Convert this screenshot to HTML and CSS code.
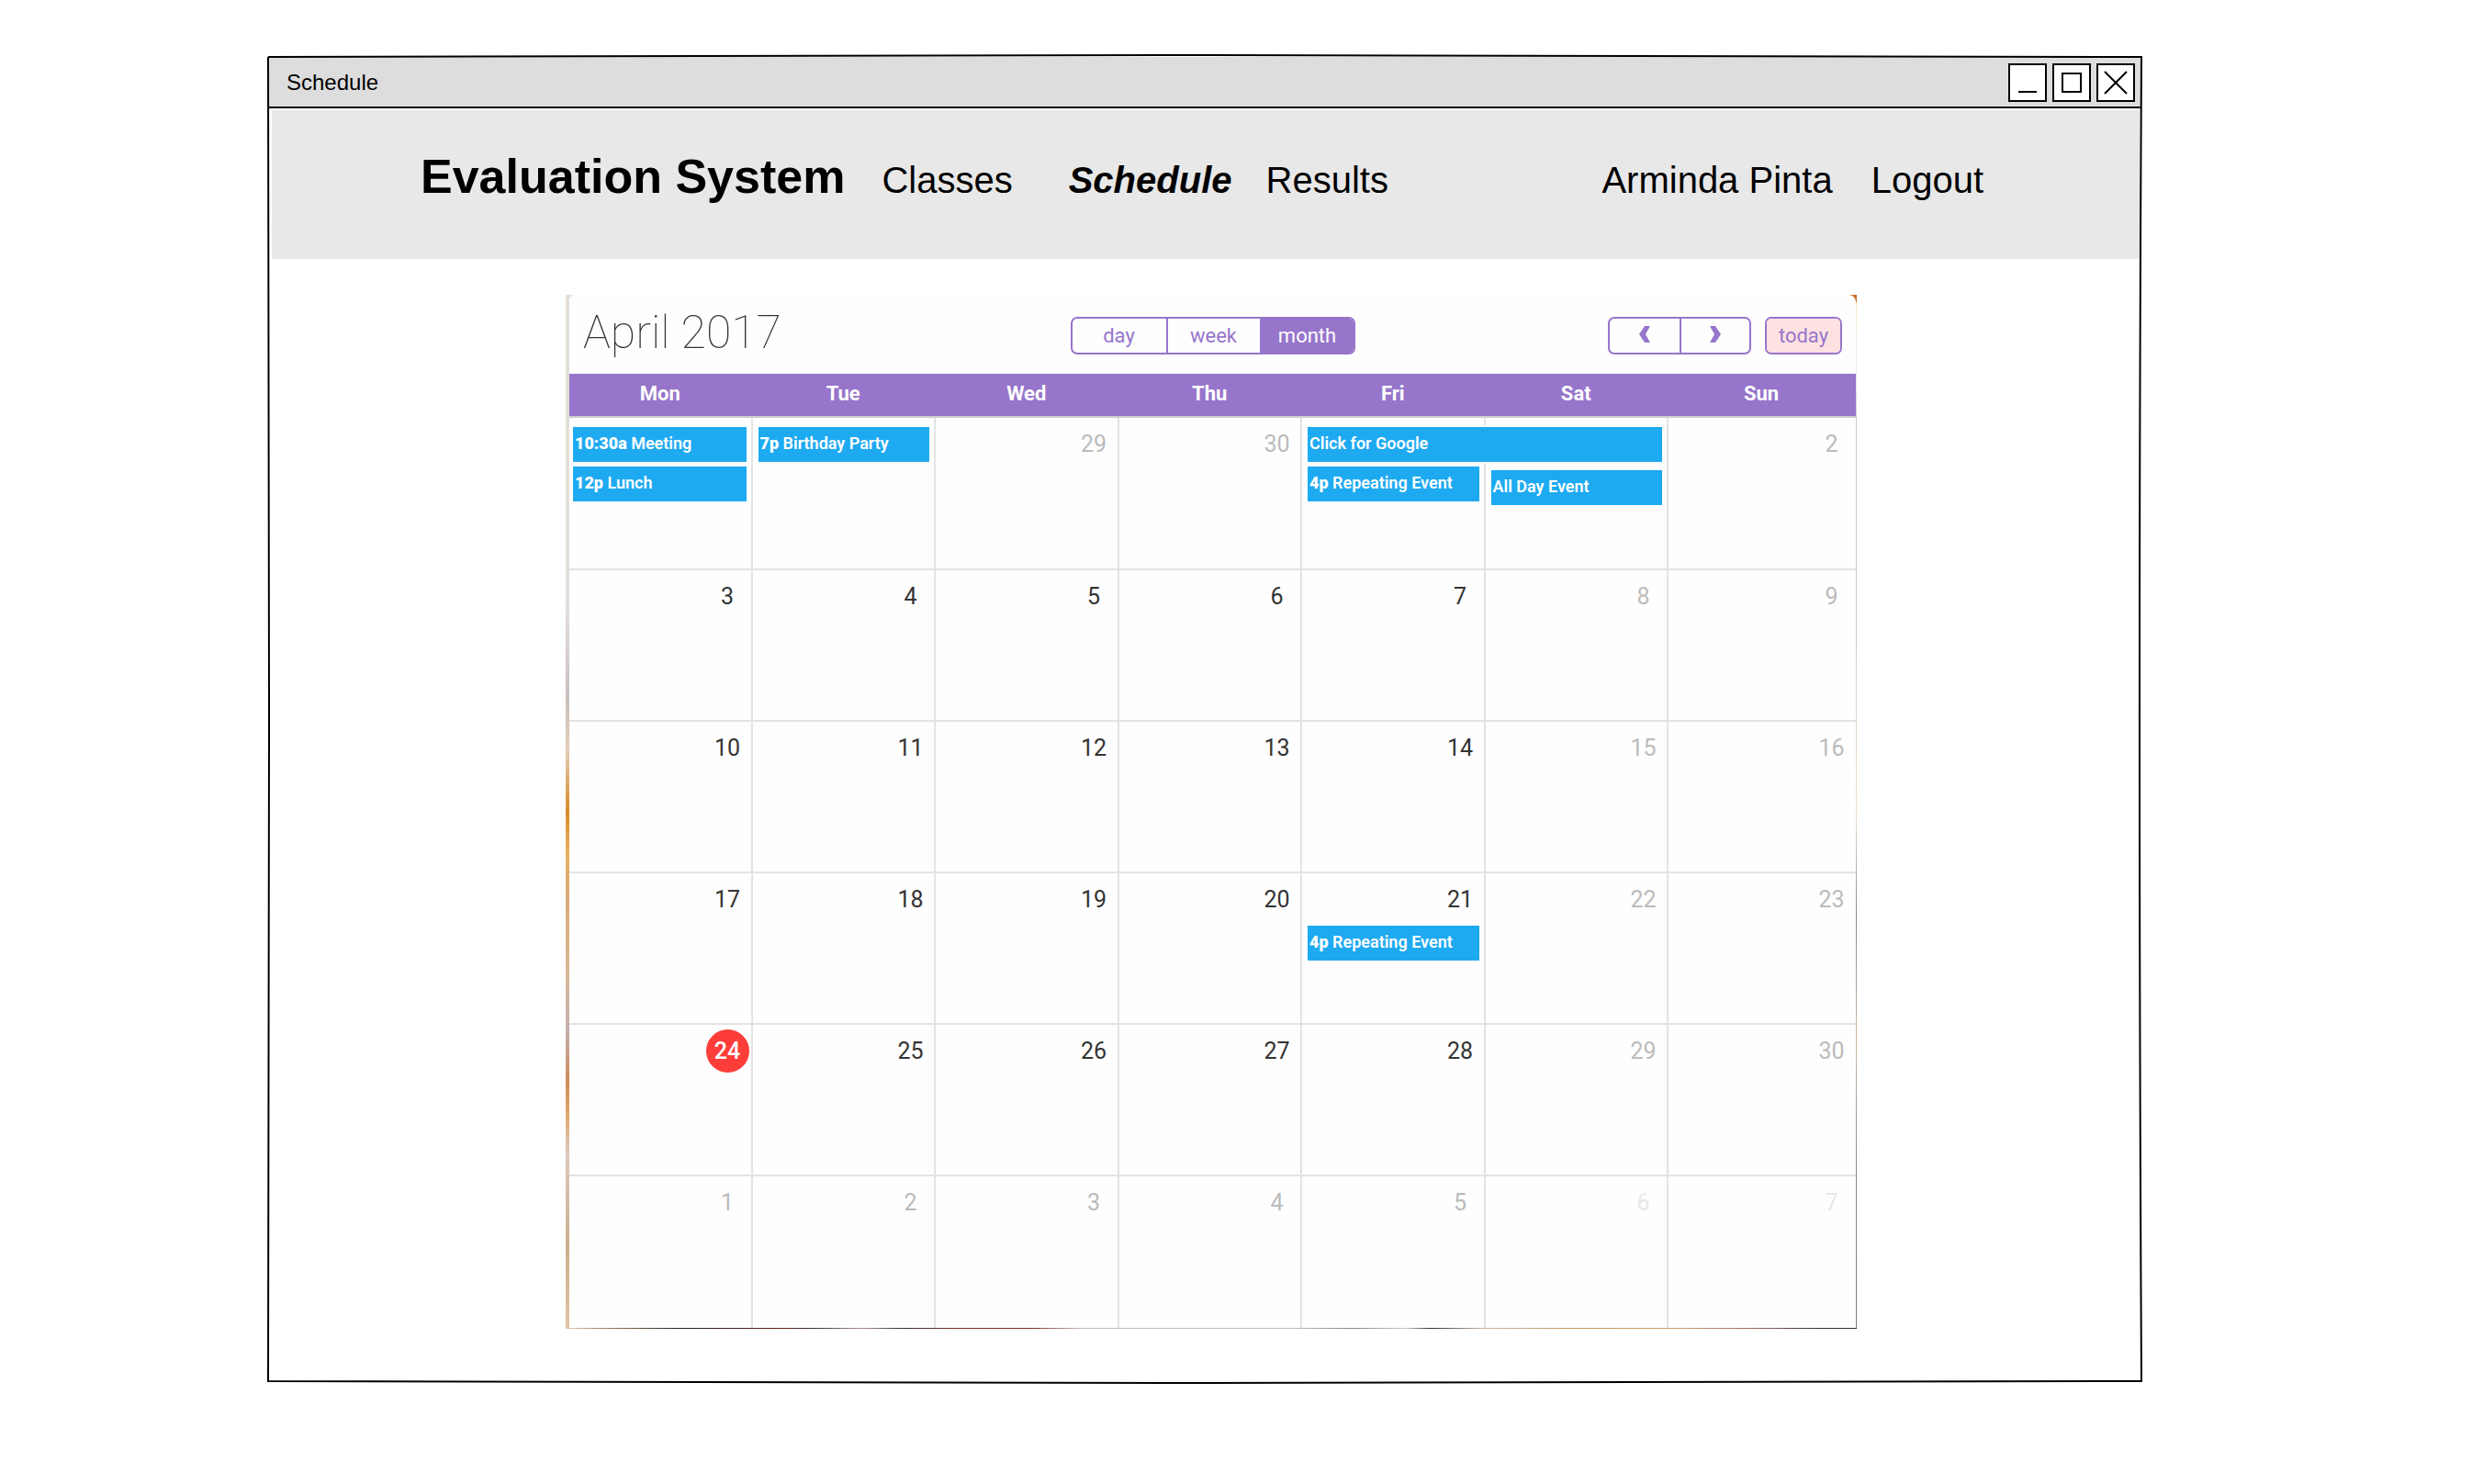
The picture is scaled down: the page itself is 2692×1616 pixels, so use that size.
FILE: index.html
```html
<!DOCTYPE html>
<html lang="en">
<head>
<meta charset="utf-8">
<title>Schedule</title>
<link rel="stylesheet" href="styles.css">
</head>
<body>
<div class="window">
  <div class="titlebar">
    <span class="titlebar-name">Schedule</span>
    <div class="window-controls">
      <button class="control" type="button" aria-label="Minimize"><svg viewBox="0 0 38 38"><path d="M9 29h20"/></svg></button>
      <button class="control" type="button" aria-label="Maximize"><svg viewBox="0 0 38 38"><path d="M9 9h20v20h-20z"/></svg></button>
      <button class="control" type="button" aria-label="Close"><svg viewBox="0 0 38 38"><path d="M7 7l24 24M31 7l-24 24"/></svg></button>
    </div>
  </div>
  <header class="navbar">
    <h1 class="brand">Evaluation System</h1>
    <nav class="nav-main">
      <a href="#classes">Classes</a>
      <a class="current" href="#schedule" aria-current="page">Schedule</a>
      <a href="#results">Results</a>
    </nav>
    <nav class="nav-user">
      <a href="#profile">Arminda Pinta</a>
      <a href="#logout">Logout</a>
    </nav>
  </header>
  <main class="content">
    <section class="photo-edge">
      <div class="calendar">
        <div class="toolbar">
          <h2 class="month">April 2017</h2>
          <div class="group views">
            <button type="button">day</button>
            <button type="button">week</button>
            <button class="active" type="button" aria-pressed="true">month</button>
          </div>
          <div class="pager">
            <div class="group arrows">
              <button type="button" aria-label="Previous month"><svg viewBox="0 0 12 18"><path d="M6 0h6L7 9l5 9H6L0 9z"/></svg></button>
              <button type="button" aria-label="Next month"><svg viewBox="0 0 12 18"><path d="M0 0h6l6 9-6 9H0l5-9z"/></svg></button>
            </div>
            <div class="group"><button class="today-button" type="button">today</button></div>
          </div>
        </div>
        <table class="days">
          <thead>
            <tr><th>Mon</th><th>Tue</th><th>Wed</th><th>Thu</th><th>Fri</th><th>Sat</th><th class="last">Sun</th></tr>
          </thead>
          <tbody>
            <tr>
              <td><ul class="events"><li><b>10:30a</b> Meeting</li><li><b>12p</b> Lunch</li></ul></td>
              <td><ul class="events"><li><b>7p</b> Birthday Party</li></ul></td>
              <td><span class="date muted">29</span></td>
              <td><span class="date muted">30</span></td>
              <td><ul class="events"><li class="two-days">Click for Google</li><li><b>4p</b> Repeating Event</li></ul></td>
              <td><ul class="events second-slot"><li>All Day Event</li></ul></td>
              <td><span class="date muted">2</span></td>
            </tr>
            <tr>
              <td><span class="date">3</span></td><td><span class="date">4</span></td><td><span class="date">5</span></td><td><span class="date">6</span></td><td><span class="date">7</span></td><td><span class="date muted">8</span></td><td><span class="date muted">9</span></td>
            </tr>
            <tr>
              <td><span class="date">10</span></td><td><span class="date">11</span></td><td><span class="date">12</span></td><td><span class="date">13</span></td><td><span class="date">14</span></td><td><span class="date muted">15</span></td><td><span class="date muted">16</span></td>
            </tr>
            <tr>
              <td><span class="date">17</span></td><td><span class="date">18</span></td><td><span class="date">19</span></td><td><span class="date">20</span></td>
              <td><span class="date">21</span><ul class="events"><li><b>4p</b> Repeating Event</li></ul></td>
              <td><span class="date muted">22</span></td><td><span class="date muted">23</span></td>
            </tr>
            <tr>
              <td><span class="date today">24</span></td><td><span class="date">25</span></td><td><span class="date">26</span></td><td><span class="date">27</span></td><td><span class="date">28</span></td><td><span class="date muted">29</span></td><td><span class="date muted">30</span></td>
            </tr>
            <tr>
              <td><span class="date muted">1</span></td><td><span class="date muted">2</span></td><td><span class="date muted">3</span></td><td><span class="date muted">4</span></td><td><span class="date muted">5</span></td><td><span class="date faint">6</span></td><td><span class="date faint">7</span></td>
            </tr>
          </tbody>
        </table>
      </div>
    </section>
  </main>
  <svg class="frame" viewBox="0 0 100 100" preserveAspectRatio="none" aria-hidden="true">
    <path d="M0 0Q50 -.28 100 0Q99.8 50 100 100Q50 100.28 0 100Q.1 50 0 0"/>
  </svg>
</div>
</body>
</html>
```
FILE: styles.css
```css
* { box-sizing: border-box; }

body {
  margin: 0;
  padding: 62px 360px 113px 292px;
  background: #fff;
  color: #000;
  font-family: "Liberation Sans", Arial, sans-serif;
}

a { color: inherit; text-decoration: none; }

button {
  margin: 0;
  padding: 0;
  border: 0;
  background: none;
  color: inherit;
  font: inherit;
}

.window {
  position: relative;
  background: #fff;
}

.frame {
  position: absolute;
  inset: 0;
  width: 100%;
  height: 100%;
  overflow: visible;
  pointer-events: none;
}

.frame path {
  fill: none;
  stroke: #000;
  stroke-width: 2px;
  vector-effect: non-scaling-stroke;
}

.titlebar {
  display: flex;
  align-items: center;
  justify-content: space-between;
  height: 56px;
  padding: 2px 7px 0 20px;
  border-bottom: 2px solid #000;
  background: #ddd;
  font-size: 24px;
}

.window-controls { display: flex; gap: 6px; }

.control {
  width: 42px;
  height: 42px;
  border: 2px solid #000;
  background: #fff;
}

.control svg {
  display: block;
  fill: none;
  stroke: #000;
  stroke-width: 2;
}

.navbar {
  display: flex;
  align-items: baseline;
  margin: 2px 2px 0 4px;
  padding: 42px 170px 56px 162px;
  background: #e8e8e8;
  font-size: 40px;
  line-height: 60px;
}

.brand {
  margin: 0 40px 0 0;
  font-size: 52px;
  line-height: 60px;
}

.nav-main { display: flex; gap: 37px; }

.nav-user {
  display: flex;
  gap: 42px;
  margin-left: auto;
}

.current {
  margin-left: 24px;
  font-weight: bold;
  font-style: italic;
}

.content { padding: 39px 310px 57px 324px; }

/* The sliver of background photo left visible round the calendar */
.photo-edge {
  padding: 0 1px 1px 4px;
  background:
    linear-gradient(#c8702a, #c8702a) top right / 8px 8px no-repeat,
    linear-gradient(to right, #e8d0a8, #a08060 3%, #222 9%, #702020 17%, #333 19%, #b09090 23%, #333 26%, #803030 30%, #803030 36%, #ccc0b8 40%, #ccc0b8 56%, #888 61%, #ccc 65%, #333 67%, #ccb8a8 71%, #c89860 78%, #d0a070 86%, #906060 93%, #333 97%) bottom / 100% 1px no-repeat,
    linear-gradient(#f5e0c0, #eee 7%, #ccc 12%, #ccc 30%, #e8d8c8 45%, #f0e0d0 50%, #888 60%, #ccb8a5 72%, #888 85%, #777) right / 1px 100% no-repeat,
    linear-gradient(#e5dfd9, #e5dfdb 30%, #c8c0bc 39%, #e3cdb8 44%, #d98b28 50%, #e8b060 54%, #d9ab78 58%, #d8b898 66%, #c4b0b0 71%, #cd8c5a 76%, #e0a468 79%, #dccabf 83%, #ccae8c 92%, #e3c4a5);
}

.calendar {
  border-radius: 6px 8px 0 0;
  background: #fefefe;
  color: #333;
  font-family: Roboto, sans-serif;
}

.toolbar {
  display: grid;
  grid-template-columns: 1fr auto 1fr;
  align-items: center;
  height: 86px;
  padding: 2px 15px 0 15px;
}

.month {
  margin: 0;
  padding-bottom: 6px;
  font-size: 50px;
  font-weight: 100;
  line-height: 60px;
}

.group {
  display: flex;
  overflow: hidden;
  border: 2px solid #9775cb;
  border-radius: 7px;
  color: #9775cb;
  font-size: 22px;
}

.group button { height: 37px; }
.group button + button { border-left: 2px solid #9775cb; }
.views button { width: 102px; }
.active { background: #9775cb; color: #fefefe; }
.arrows button { width: 76px; }
.arrows svg { width: 12px; height: 18px; fill: #9775cb; }
.today-button { width: 80px; background: #fde2e1; }

.pager {
  display: flex;
  justify-content: flex-end;
  gap: 15px;
}

.days {
  width: 100%;
  border-spacing: 0;
  table-layout: fixed;
}

th {
  height: 48px;
  padding: 0 2px 4px 0;
  border-bottom: 2px solid #ccc;
  background: #9775cb;
  color: #fefefe;
  font-size: 22px;
  font-weight: bold;
}

.last { width: 204px; }

td {
  height: 165px;
  padding: 0;
  border: 0 solid #e3e3e3;
  border-width: 0 2px 2px 0;
  vertical-align: top;
}

tr:first-child td { height: 166px; }
td:last-child { border-right-width: 0; }
tr:last-child td { border-bottom-width: 0; }

.date {
  display: block;
  width: 47px;
  height: 47px;
  margin: 5px 2px 0 auto;
  border-radius: 50%;
  font-size: 25px;
  line-height: 47px;
  text-align: center;
}

td:last-child .date { margin-right: 3px; }

.muted { color: #bbb; }
.faint { color: #e8e8e8; }
.today { background: #fd3d39; color: #fefefe; font-weight: 500; }

.events {
  display: grid;
  gap: 5px;
  margin: 10px 5px 0 6px;
  padding: 0;
  color: #fefefe;
  font-size: 18px;
  font-weight: 600;
  line-height: 35px;
  list-style: none;
}

td:first-child .events { margin-left: 4px; }
.date + .events { margin-top: 5px; }
.second-slot { margin-top: 57px; }

.events li {
  height: 38px;
  padding-left: 2px;
  background: #1eaaf1;
  white-space: nowrap;
}

.events .two-days {
  position: relative;
  width: calc(200% + 13px);
  box-shadow: 0 0 0 2px #fefefe;
}
```
